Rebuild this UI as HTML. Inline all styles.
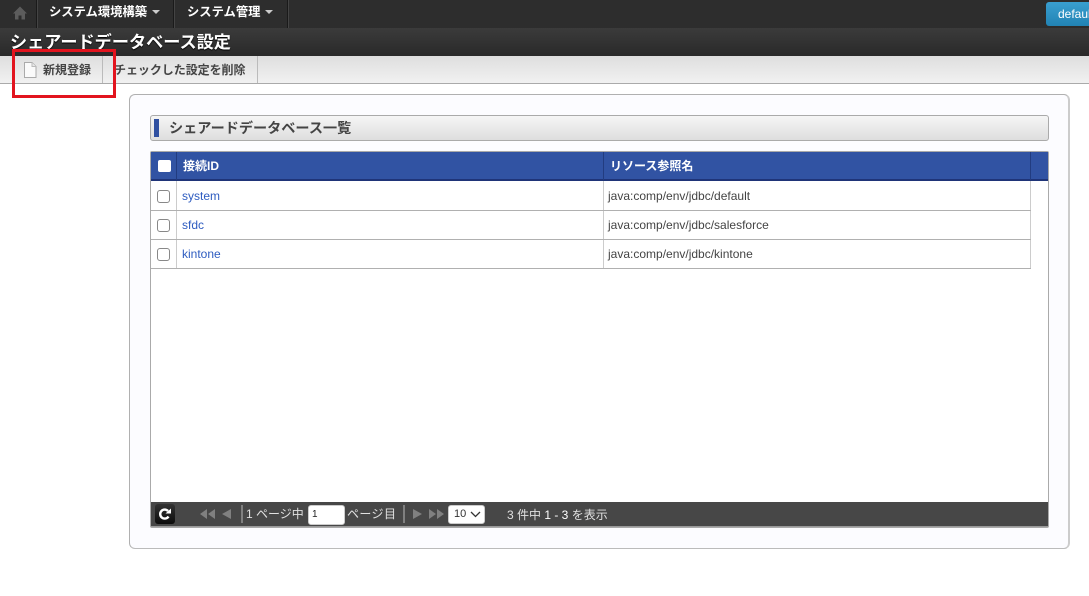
<!DOCTYPE html>
<html lang="ja"><head><meta charset="utf-8"><style>
html,body{margin:0;padding:0;background:#fff}
body{width:1089px;height:596px;overflow:hidden;position:relative;font-family:"Liberation Sans","Noto Sans CJK JP",sans-serif;font-size:12px;color:#333}
div,span,a{position:absolute;white-space:nowrap;box-sizing:border-box}
a{color:#2e5cc0;text-decoration:none}
.nt{color:#fff;font-weight:bold;font-size:12.300px;line-height:16px}
.v{background:#1a1a1a;width:1px;top:0;height:28px;box-shadow:1px 0 0 #444}
.cb{width:13px;height:13px;border:1px solid #888;border-radius:3px;background:#fff;left:157px}
.rl{left:151px;width:880px;height:1px;background:#b0b0b0}
.cell{line-height:16px;font-size:12px;color:#444}
.pt{color:#e0e0e0;font-size:12px;line-height:16px;top:506px}
</style></head><body>
<div style="left:0;top:0;width:1089px;height:28px;background:#2d2d2d"></div>
<div class="v" style="left:36px"></div><div class="v" style="left:173px"></div><div class="v" style="left:287px"></div>
<svg style="position:absolute;left:12px;top:5px" width="16" height="16" viewBox="0 0 16 16"><path d="M8 1.500L15 8.500H13V14.500H9.500V10.500H6.500V14.500H3V8.500H1Z" fill="#5c5c5c"/></svg>
<span class="nt" style="left:49px;top:4px">システム環境構築</span>
<svg style="position:absolute;left:152px;top:10px" width="8" height="4"><path d="M0 0H8L4 4Z" fill="#ccc"/></svg>
<span class="nt" style="left:187px;top:4px">システム管理</span>
<svg style="position:absolute;left:265px;top:10px" width="8" height="4"><path d="M0 0H8L4 4Z" fill="#ccc"/></svg>
<div style="left:1046px;top:2px;width:60px;height:24px;border-radius:3px;background:linear-gradient(#3a9fd0,#2283b4);color:#fff;font-size:12px;line-height:24px;padding-left:12px">default</div>
<div style="left:0;top:28px;width:1089px;height:28px;background:linear-gradient(#3b3b3b,#292929)"></div>
<span style="left:10px;top:32px;color:#fff;font-weight:bold;font-size:17.150px;line-height:20px;text-shadow:0 1px 1px #000">シェアードデータベース設定</span>
<div style="left:0;top:56px;width:1089px;height:28px;background:linear-gradient(#dedede,#f1f1f1);border-bottom:1px solid #aaa"></div>
<div style="left:102px;top:56px;width:1px;height:27px;background:#bbb"></div>
<div style="left:257px;top:56px;width:1px;height:27px;background:#bbb"></div>
<svg style="position:absolute;left:23px;top:62px" width="14" height="16" viewBox="0 0 14 16"><path d="M1.500 .5H9L13 4.500V15.500H1.500Z" fill="#fafafa" stroke="#aaa"/><path d="M9 .5V4.500H13" fill="#e8e8e8" stroke="#bbb"/></svg>
<span style="left:43px;top:62px;font-size:12px;line-height:16px;font-weight:bold;color:#444">新規登録</span>
<span style="left:114px;top:62px;font-size:12px;line-height:16px;font-weight:bold;color:#444;letter-spacing:-.05px">チェックした設定を削除</span>
<div style="left:12px;top:49px;width:104px;height:49px;border:3px solid #e2141e"></div>

<div style="left:129px;top:94px;width:941px;height:455px;background:#fcfcff;border:1px solid #b0b0b0;border-right:2px solid #ccc;border-bottom:1px solid #bbb;border-radius:6px"></div>
<div style="left:150px;top:115px;width:899px;height:26px;background:linear-gradient(#f6f6f6,#dedede);border:1px solid #aaa;border-radius:3px"></div>
<div style="left:154px;top:119px;width:5px;height:18px;background:#2f4fa0"></div>
<span style="left:169px;top:119px;font-size:14.150px;line-height:18px;font-weight:bold;color:#444">シェアードデータベース一覧</span>

<div style="left:150px;top:151px;width:899px;height:377px;background:#fff;border:1px solid #aaa;border-radius:2px"></div>
<div style="left:151px;top:152px;width:897px;height:29px;background:#3153a3;border-bottom:2px solid #1f3478"></div>
<div style="left:176px;top:152px;width:1px;height:28px;background:#223c80"></div>
<div style="left:603px;top:152px;width:1px;height:28px;background:#223c80"></div>
<div style="left:1030px;top:152px;width:1px;height:28px;background:#223c80"></div>
<div style="left:158px;top:160px;width:13px;height:12px;background:#fff;border-radius:2px"></div>
<span style="left:183px;top:158px;color:#fff;font-weight:bold;font-size:12px;line-height:16px">接続ID</span>
<span style="left:610px;top:158px;color:#fff;font-weight:bold;font-size:12px;line-height:16px">リソース参照名</span>

<div style="left:176px;top:181px;width:1px;height:87px;background:#ccc"></div>
<div style="left:603px;top:181px;width:1px;height:87px;background:#ccc"></div>
<div style="left:1030px;top:181px;width:1px;height:88px;background:#ccc"></div>
<div class="rl" style="top:210px"></div><div class="rl" style="top:239px"></div><div class="rl" style="top:268px"></div>

<div class="cb" style="top:190px"></div><div class="cb" style="top:219px"></div><div class="cb" style="top:248px"></div>
<a class="cell" style="left:182px;top:188px;color:#2e5cc0">system</a>
<a class="cell" style="left:182px;top:217px;color:#2e5cc0">sfdc</a>
<a class="cell" style="left:182px;top:246px;color:#2e5cc0">kintone</a>
<span class="cell" style="left:608px;top:188px">java:comp/env/jdbc/default</span>
<span class="cell" style="left:608px;top:217px">java:comp/env/jdbc/salesforce</span>
<span class="cell" style="left:608px;top:246px">java:comp/env/jdbc/kintone</span>

<div style="left:151px;top:502px;width:897px;height:25px;background:#474747;border-bottom:1px solid #999"></div>
<div style="left:155px;top:504px;width:20px;height:20px;border-radius:3px;background:linear-gradient(#333,#0c0c0c)"></div>
<svg style="position:absolute;left:158px;top:507px" width="14" height="14" viewBox="0 0 14 14"><path d="M10.500 9.500A4.500 4.500 0 1 1 10 4" fill="none" stroke="#fff" stroke-width="2.400"/><path d="M7.500 6.500H13V1.500Z" fill="#fff"/></svg>
<svg style="position:absolute;left:200px;top:509px" width="34" height="11" fill="#808080"><path d="M7 0V10L0 5ZM15 0V10L8 5ZM31 0V10L22 5Z"/></svg>
<div style="left:241px;top:505px;width:2px;height:18px;background:#808080"></div>
<span class="pt" style="left:246px">1 ページ中</span>
<div style="left:308px;top:505px;width:37px;height:20px;background:#fff;border:1px solid #ccc;border-radius:3px;color:#222;font-size:10px;line-height:18px;padding-left:3px">1</div>
<span class="pt" style="left:347px;letter-spacing:.4px">ページ目</span>
<div style="left:403px;top:505px;width:2px;height:18px;background:#808080"></div>
<svg style="position:absolute;left:413px;top:509px" width="32" height="11" fill="#808080"><path d="M0 0L9 5L0 10ZM16 0L23 5L16 10ZM24 0L31 5L24 10Z"/></svg>
<div style="left:448px;top:505px;width:37px;height:19px;background:#fff;border:1px solid #ccc;border-radius:3px;color:#333;font-size:11px;line-height:17px;padding-left:5px">10</div>
<svg style="position:absolute;left:470px;top:511px" width="11" height="7"><path d="M1 1L5.500 5.500L10 1" fill="none" stroke="#333" stroke-width="1.300"/></svg>
<span class="pt" style="left:507px;top:507px">3 件中 <span style="position:static;color:#fff">1 - 3</span> を表示</span>
</body></html>
